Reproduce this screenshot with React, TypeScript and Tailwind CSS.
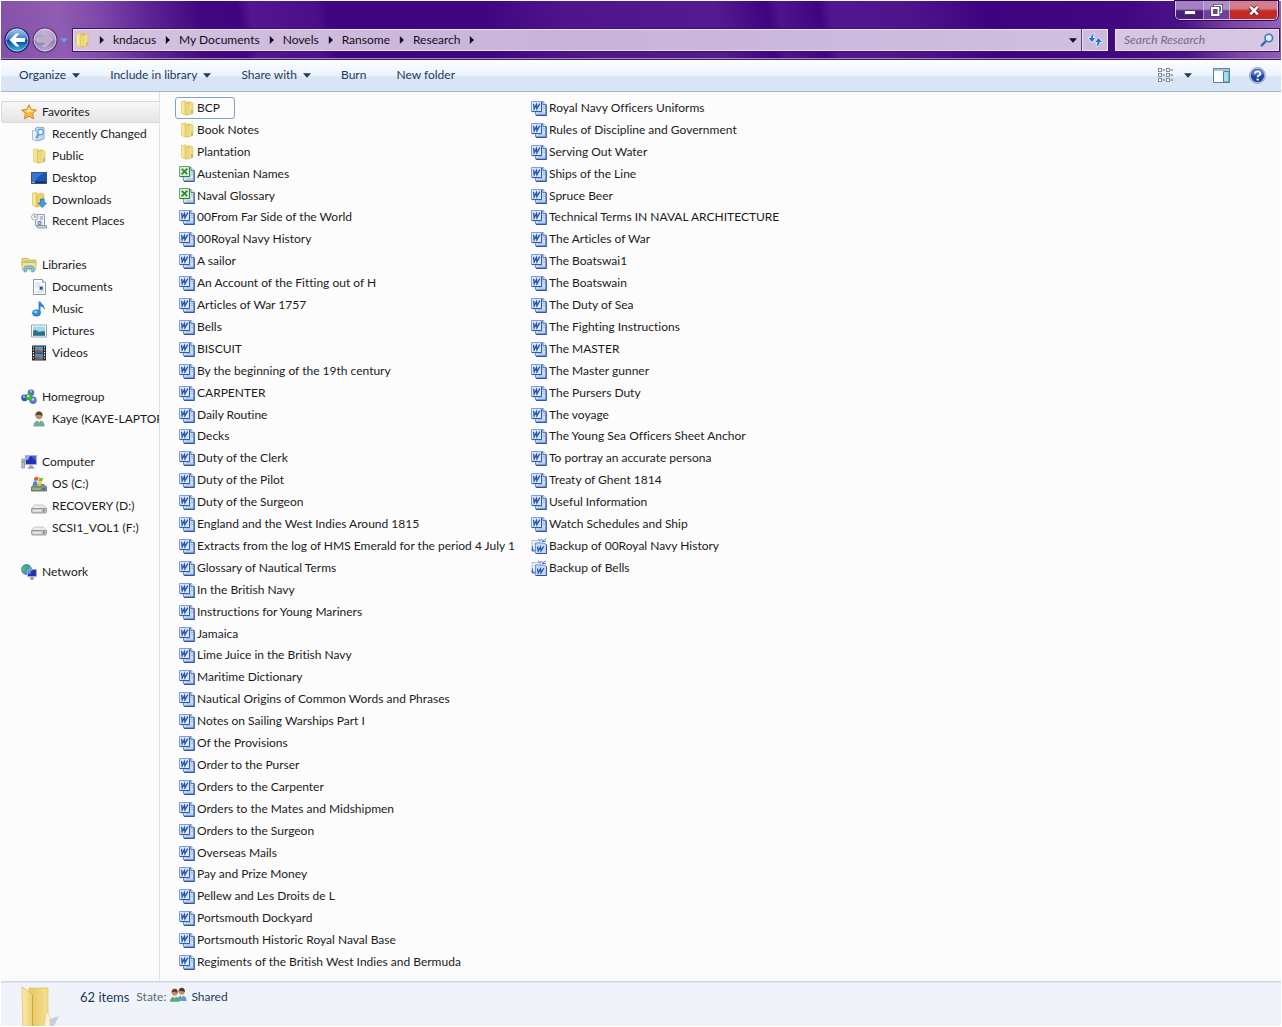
import React from "react";

type IconProps = { className?: string };
type Icon = (props: IconProps) => React.JSX.Element;

const base = "block size-4 shrink-0";

function FolderIcon({ className = base }: IconProps) {
  return (
    <svg viewBox="0 0 16 16" className={className} aria-hidden="true">
      <path d="M2.500 1.500 7 .8v14.400L2.500 13.500z" fill="#f3dc80" stroke="#dcbd58" strokeWidth=".5" />
      <path d="M7 3 10.500 1.500V14L7 15.200z" fill="#e9c95f" stroke="#d3b04a" strokeWidth=".5" />
      <path d="M9 3.500 12.500 2 14 3.500v10L9 15z" fill="#f2db82" stroke="#d5b450" strokeWidth=".5" />
      <path d="M4 2.500v10.500" stroke="#fbf0b4" strokeWidth="1.200" />
      <path d="M8 4v10" stroke="#fdf5cd" strokeWidth=".8" />
      <path d="M12 10.500l2-.5v3.500l-2 .5z" fill="#a9c48a" />
    </svg>
  );
}

function WordIcon({ className = base }: IconProps) {
  return (
    <svg viewBox="0 0 16 16" className={className} aria-hidden="true">
      <path d="M4.500 1.500h7.500l3 3v10.500H4.500z" fill="#cfe0fa" stroke="#6f92cc" />
      <path d="M15.200 4.500V15.400H5" fill="none" stroke="#2f559f" strokeWidth="1.100" />
      <path d="M12 1.500v3h3" fill="#f4f8ff" stroke="#3d5f9b" strokeWidth=".8" />
      <path d="M12 6.500h2M12 8.500h2M7 13h7" stroke="#93b3e6" strokeWidth=".8" />
      <path d="M.5 1.500H10.500V11.500H.5z" fill="#dbe7fb" stroke="#7c9fdb" />
      <path d="M10.600 2V11.600H1" fill="none" stroke="#2c55a8" />
      <path d="M2.600 3.800 3.200 8.800 5.500 4.500l.4 4.300L8.800 3.600" fill="none" stroke="#2450ae" strokeWidth="1.300" />
    </svg>
  );
}

function ExcelIcon({ className = base }: IconProps) {
  return (
    <svg viewBox="0 0 16 16" className={className} aria-hidden="true">
      <path d="M4.500 1.500h7.500l3 3v10.500H4.500z" fill="#dbe9f6" stroke="#7f9cc2" />
      <path d="M15.200 4.500V15.400H5" fill="none" stroke="#3d5f91" strokeWidth="1.100" />
      <path d="M12 1.500v3h3" fill="#f6faff" stroke="#3f5f86" strokeWidth=".8" />
      <path d="M12 6.500h2M12 9h2M7 13h7M10 12v2.500" stroke="#9bb8d8" strokeWidth=".8" />
      <path d="M.5.500H10.500V10.500H.5z" fill="#d8eed2" stroke="#62a85e" />
      <path d="M10.600 1V10.600H1" fill="none" stroke="#2f7c36" />
      <path d="M2.800 2.800l5.400 5.400M8.400 2.600l-5.800 5.800" fill="none" stroke="#2c8a32" strokeWidth="1.700" />
    </svg>
  );
}

function BackupIcon({ className = base }: IconProps) {
  return (
    <svg viewBox="0 0 16 16" className={className} aria-hidden="true">
      <path d="M1 2.500h8v9H1z" fill="#e4ecf8" stroke="#a3b6d3" strokeWidth=".8" />
      <path d="M7 .8l2.500 2 1-1.800 1.500 1.800L15 .8M11 3.500h4" fill="none" stroke="#5f7fb8" strokeWidth="1" />
      <path d="M4.500 5H13l2.500 1.500v9h-11z" fill="#c6daf8" stroke="#6f92cc" />
      <path d="M15.400 6.500v9H5" fill="none" stroke="#2f559f" />
      <path d="M6.500 8.500l.8 4.300L9.500 9l.5 3.800 2.700-4.500" fill="none" stroke="#1f55b5" strokeWidth="1.300" />
      <path d="M1.500 8.500v4.300H4M.5 11.200l1 1.600" fill="none" stroke="#4770b5" strokeWidth="1.200" />
    </svg>
  );
}

function StarIcon({ className = base }: IconProps) {
  return (
    <svg viewBox="0 0 16 16" className={className} aria-hidden="true">
      <path d="M8 .8l2.200 4.700 5.200.6-3.900 3.500 1.100 5.200L8 12.200l-4.600 2.600 1.100-5.200L.6 6.100l5.200-.6z" fill="#fbb63f" stroke="#d9822b" strokeLinejoin="round" />
      <path d="M8 2.800l1.500 3.500 3.500.5-5 1.700-4.700-1.700 3.200-.5z" fill="#ffe79a" />
    </svg>
  );
}

function SearchFolderIcon({ className = base }: IconProps) {
  return (
    <svg viewBox="0 0 16 16" className={className} aria-hidden="true">
      <path d="M4.500 2 8 1l5 .8v11l-6 2.200-2.500-1z" fill="#bdd8f2" stroke="#7fa6cf" strokeWidth=".9" />
      <path d="M1.500 4.500 6 5v10l-4.500-1.500z" fill="#e4f0fb" stroke="#8fb2d8" strokeWidth=".8" />
      <circle cx="9.500" cy="6" r="2.800" fill="#eff7ff" stroke="#5b94d0" strokeWidth="1.100" />
      <path d="M7.500 8.500 5 12" stroke="#5b94d0" strokeWidth="1.600" />
    </svg>
  );
}

function DesktopIcon({ className = base }: IconProps) {
  return (
    <svg viewBox="0 0 16 16" className={className} aria-hidden="true">
      <path d="M.5 2.500h15v11H.5z" fill="#1d56b8" stroke="#3a4f80" />
      <path d="M1 3h12Q6 6 4 11.500H1z" fill="#4586dc" opacity=".7" />
      <path d="M1 11.500h14V13H1z" fill="#1a2c57" />
      <path d="M1 11.500h3V13H1z" fill="#6fb2ef" />
    </svg>
  );
}

function DownloadsIcon({ className = base }: IconProps) {
  return (
    <svg viewBox="0 0 16 16" className={className} aria-hidden="true">
      <path d="M1.500 1 6 .6v14.600L1.500 13z" fill="#f3dc80" stroke="#d5b64f" strokeWidth=".6" />
      <path d="M6 2.500 11 1l2 1.500V13l-7 2z" fill="#ecd06c" stroke="#cfae48" strokeWidth=".6" />
      <path d="M3 2.500v10.500" stroke="#fbf0b4" strokeWidth="1.200" />
      <path d="M9.500 7h3.500v4h2.500l-4.200 4.600L7 11h2.500z" fill="#3ea0ea" stroke="#1b67b4" strokeWidth=".7" />
    </svg>
  );
}

function RecentIcon({ className = base }: IconProps) {
  return (
    <svg viewBox="0 0 16 16" className={className} aria-hidden="true">
      <path d="M4.500 1.500h9v11h-9z" fill="#eef2f6" stroke="#8f9cab" />
      <path d="M5.500 12.500h10v2.500h-9z" fill="#cdd5de" stroke="#7f8c9c" strokeWidth=".8" />
      <path d="M9 4h3M9 6h3M7 8.500h3v3H7z" fill="#a7c3df" stroke="#6c87a6" strokeWidth=".9" />
      <circle cx="3.800" cy="4" r="3.200" fill="#f8fafc" stroke="#98a3b0" strokeWidth=".9" />
      <path d="M3.800 2v2.200h1.700" fill="none" stroke="#5b6877" strokeWidth=".8" />
    </svg>
  );
}

function LibrariesIcon({ className = base }: IconProps) {
  return (
    <svg viewBox="0 0 16 16" className={className} aria-hidden="true">
      <path d="M1 1.500h6l1 1.500h7v5H1z" fill="#f3d873" stroke="#cda942" strokeWidth=".8" />
      <path d="M2.500 3.500h11v3h-11z" fill="#a8d689" />
      <path d="M.8 5.500h14.400L14.500 13h-13z" fill="#f7e59b" stroke="#d2b24e" strokeWidth=".8" />
      <path d="M3 14.800V11q0-2 2-2h6q2 0 2 2v3.800h-2.300v-3.300H5.300v3.300z" fill="#8cc7ee" stroke="#4f94c6" strokeWidth=".8" />
    </svg>
  );
}

function DocumentsIcon({ className = base }: IconProps) {
  return (
    <svg viewBox="0 0 16 16" className={className} aria-hidden="true">
      <path d="M2.500.5h9l3 3v12h-12z" fill="#fdfdfe" stroke="#8c98a8" />
      <path d="M11.500.5v3h3" fill="#dfe6ee" stroke="#8c98a8" strokeWidth=".8" />
      <path d="M4.500 4h5M4.500 6h4M4.500 8h3M4.500 13h8" stroke="#b6c1ce" strokeWidth=".8" />
      <path d="M8 6.500h4.500v5H8z" fill="#9cc7ea" />
      <path d="M9 8h2.500v2.500H9z" fill="#1f4a86" />
    </svg>
  );
}

function MusicIcon({ className = base }: IconProps) {
  return (
    <svg viewBox="0 0 16 16" className={className} aria-hidden="true">
      <ellipse cx="5.500" cy="12" rx="4" ry="3.200" fill="#2b8fdc" stroke="#1767ac" strokeWidth=".6" />
      <path d="M7.600 12V.5h1.900c.3 2.500 5 3.500 4 8.500-.5-2-2-3.300-4-3.800V12z" fill="#2784d2" />
      <ellipse cx="4.700" cy="11" rx="1.900" ry="1.200" fill="#8fd0fa" />
    </svg>
  );
}

function PicturesIcon({ className = base }: IconProps) {
  return (
    <svg viewBox="0 0 16 16" className={className} aria-hidden="true">
      <path d="M.5 2h15v12H.5z" fill="#fff" stroke="#93a3b3" />
      <path d="M2 3.500h12v9H2z" fill="#9fd8f5" />
      <path d="M2 8.500c2-3 4-1 5 0s4-1 7 0v4H2z" fill="#2e7a72" />
      <path d="M2 11h12v1.500H2z" fill="#2a64a8" />
    </svg>
  );
}

function VideosIcon({ className = base }: IconProps) {
  return (
    <svg viewBox="0 0 16 16" className={className} aria-hidden="true">
      <path d="M1 .5h14v15H1z" fill="#23272e" />
      <path d="M4 1.500h8v6H4z" fill="#4e9ad3" />
      <path d="M4 8.500h8v6H4z" fill="#4b8fc9" />
      <path d="M4 5.500l3-1L10 6l2-.5v2H4zM4 12.500l3-1 3 2 2-1v2H4z" fill="#a4502f" />
      <path d="M2.500 1.500v13M13.500 1.500v13" stroke="#e6eaee" strokeWidth="1.200" strokeDasharray="1.300 1.400" />
    </svg>
  );
}

function HomegroupIcon({ className = base }: IconProps) {
  return (
    <svg viewBox="0 0 16 16" className={className} aria-hidden="true">
      <circle cx="10" cy="3.800" r="3.300" fill="#4577c4" />
      <circle cx="3.600" cy="8.800" r="3.400" fill="#2f57b5" />
      <circle cx="12" cy="11.200" r="3.700" fill="#5b77c4" />
      <circle cx="8" cy="8" r="3.300" fill="#44ad3c" />
      <circle cx="7.300" cy="7" r="1.300" fill="#b5ec9c" />
      <circle cx="3" cy="7.800" r="1.200" fill="#9dbdf2" />
      <circle cx="10" cy="2.600" r="1.100" fill="#a8cdf6" />
      <circle cx="12" cy="10.500" r="1.300" fill="#c1d1f7" />
    </svg>
  );
}

function Person({ coat, hair }: { coat: string; hair: string }) {
  return (
    <>
      <path d="M1 15.500c0-4 2-5.500 4.500-6h2C10.500 10 12 11.500 12 15.500z" fill={coat} />
      <path d="M5 9l1.500 3L8 9z" fill="#f6efe6" />
      <circle cx="6.500" cy="5" r="3.300" fill="#c98f68" />
      <path d="M3 5.500C2.500 1.500 5 .3 7 .5s3.500 1.800 3 5C9 3.800 6 4.500 4 3.800z" fill={hair} />
    </>
  );
}

function UserIcon({ className = base }: IconProps) {
  return (
    <svg viewBox="0 0 16 16" className={className} aria-hidden="true">
      <g transform="translate(1.500 0)">
        <Person coat="#6fae93" hair="#5c4330" />
      </g>
    </svg>
  );
}

function UsersIcon({ className = base }: IconProps) {
  return (
    <svg viewBox="0 0 18 16" className={className} aria-hidden="true">
      <g transform="translate(6.500 0) scale(.92)">
        <Person coat="#5f9fc2" hair="#4b3a30" />
      </g>
      <g transform="translate(-1 1) scale(.92)">
        <Person coat="#5aa87f" hair="#6b3f2a" />
      </g>
    </svg>
  );
}

function ComputerIcon({ className = base }: IconProps) {
  return (
    <svg viewBox="0 0 16 16" className={className} aria-hidden="true">
      <path d="M.8 5h2.700v9H.8z" fill="#b9c2cc" stroke="#7c8793" strokeWidth=".7" />
      <path d="M1.200 7h1.800v2H1.200z" fill="#65b548" />
      <path d="M4.500 1.500h11v9h-11z" fill="#2431b8" stroke="#aab4c4" />
      <path d="M5 2h4l-2 4H5z" fill="#8ea3f0" />
      <path d="M10 2h5v5z" fill="#4c63dc" />
      <path d="M8.500 11h3l1 3h-5z" fill="#a7b0bc" />
      <path d="M6.500 14h7" stroke="#7c8793" />
    </svg>
  );
}

function OsDriveIcon({ className = base }: IconProps) {
  return (
    <svg viewBox="0 0 16 16" className={className} aria-hidden="true">
      <path d="M.5 11 3 8.500h10l2.500 2.500v4H.5z" fill="#7e8b8f" stroke="#56666a" strokeWidth=".8" />
      <path d="M1.500 12h8v2h-8z" fill="#98b94e" />
      <path d="M11 12h3v2h-3z" fill="#3c6fa8" />
      <path d="M3.500 1.500Q5.500.2 7.500 1.300L6.700 4.800Q4.700 4 2.700 5z" fill="#e8592c" />
      <path d="M8.200 1.600Q10 2.600 12.200 1.400L11.300 5Q9.300 6 7.300 5z" fill="#7cb93a" />
      <path d="M2.500 5.800Q4.500 4.800 6.500 5.600L5.700 9Q3.700 8.200 1.700 9.200z" fill="#3b8be0" />
      <path d="M7.200 5.900Q9 6.800 11.100 5.800L10.300 9.200Q8.300 10.200 6.300 9.200z" fill="#f7c22f" />
    </svg>
  );
}

function DriveIcon({ className = base }: IconProps) {
  return (
    <svg viewBox="0 0 16 16" className={className} aria-hidden="true">
      <path d="M.6 10.500 3.500 7h9l2.900 3.500z" fill="#ececec" stroke="#b0b0b0" strokeWidth=".7" />
      <path d="M.6 10.500h14.800V14q0 1-1 1H1.600q-1 0-1-1z" fill="#c6c8ca" stroke="#888c90" strokeWidth=".8" />
      <path d="M2 12.800h8" stroke="#f2f3f4" strokeWidth="1.200" />
      <path d="M12 11.800h1.500v1.800H12z" fill="#55685c" />
    </svg>
  );
}

function NetworkIcon({ className = base }: IconProps) {
  return (
    <svg viewBox="0 0 16 16" className={className} aria-hidden="true">
      <circle cx="5.500" cy="5.500" r="5" fill="#2f9ad6" stroke="#2266a6" strokeWidth=".6" />
      <path d="M2 2.500C4 1 6 1.500 5.500 3.500S3 5 3.500 7 2 8.500.9 6 1.200 3.500 2 2.500zM7.500 1.500c2 .5 3 2 3 4L8 4z" fill="#5cba4b" />
      <path d="M6.500 5.500h9v7h-9z" fill="#2431b8" stroke="#aab4c4" strokeWidth=".9" />
      <path d="M7 6h4l-2 4H7z" fill="#6487ec" />
      <path d="M9.500 13h3l.8 2.500h-4.600z" fill="#8f9aa8" />
    </svg>
  );
}

function RightArrow() {
  return (
    <svg viewBox="0 0 5 8" className="mx-2 block h-2 w-[7px] shrink-0" aria-hidden="true">
      <path d="M.8 0 5 4 .8 8z" fill="#120a1c" />
    </svg>
  );
}

function DownArrow({ className = "block h-[5px] w-2 shrink-0" }: IconProps) {
  return (
    <svg viewBox="0 0 8 5" className={className} aria-hidden="true">
      <path d="M0 .3h8L4 4.700z" fill="currentColor" />
    </svg>
  );
}

const path = ["kndacus", "My Documents", "Novels", "Ransome", "Research"];

const actions: { label: string; menu?: boolean }[] = [
  { label: "Organize", menu: true },
  { label: "Include in library", menu: true },
  { label: "Share with", menu: true },
  { label: "Burn" },
  { label: "New folder" },
];

const places: { title: string; icon: Icon; items: { name: string; icon: Icon }[] }[] = [
  {
    title: "Favorites",
    icon: StarIcon,
    items: [
      { name: "Recently Changed", icon: SearchFolderIcon },
      { name: "Public", icon: FolderIcon },
      { name: "Desktop", icon: DesktopIcon },
      { name: "Downloads", icon: DownloadsIcon },
      { name: "Recent Places", icon: RecentIcon },
    ],
  },
  {
    title: "Libraries",
    icon: LibrariesIcon,
    items: [
      { name: "Documents", icon: DocumentsIcon },
      { name: "Music", icon: MusicIcon },
      { name: "Pictures", icon: PicturesIcon },
      { name: "Videos", icon: VideosIcon },
    ],
  },
  { title: "Homegroup", icon: HomegroupIcon, items: [{ name: "Kaye (KAYE-LAPTOP)", icon: UserIcon }] },
  {
    title: "Computer",
    icon: ComputerIcon,
    items: [
      { name: "OS (C:)", icon: OsDriveIcon },
      { name: "RECOVERY (D:)", icon: DriveIcon },
      { name: "SCSI1_VOL1 (F:)", icon: DriveIcon },
    ],
  },
  { title: "Network", icon: NetworkIcon, items: [] },
];

const folders = ["BCP", "Book Notes", "Plantation"];
const sheets = ["Austenian Names", "Naval Glossary"];
const documents = [
  "00From Far Side of the World", "00Royal Navy History", "A sailor", "An Account of the Fitting out of H",
  "Articles of War 1757", "Bells", "BISCUIT", "By the beginning of the 19th century", "CARPENTER",
  "Daily Routine", "Decks", "Duty of the Clerk", "Duty of the Pilot", "Duty of the Surgeon",
  "England and the West Indies Around 1815", "Extracts from the log of HMS Emerald for the period 4 July 1",
  "Glossary of Nautical Terms", "In the British Navy", "Instructions for Young Mariners", "Jamaica",
  "Lime Juice in the British Navy", "Maritime Dictionary", "Nautical Origins of Common Words and Phrases",
  "Notes on Sailing Warships Part I", "Of the Provisions", "Order to the Purser", "Orders to the Carpenter",
  "Orders to the Mates and Midshipmen", "Orders to the Surgeon", "Overseas Mails", "Pay and Prize Money",
  "Pellew and Les Droits de L", "Portsmouth Dockyard", "Portsmouth Historic Royal Naval Base",
  "Regiments of the British West Indies and Bermuda", "Royal Navy Officers Uniforms",
  "Rules of Discipline and Government", "Serving Out Water", "Ships of the Line", "Spruce Beer",
  "Technical Terms IN NAVAL ARCHITECTURE", "The Articles of War", "The Boatswai1", "The Boatswain",
  "The Duty of Sea", "The Fighting Instructions", "The MASTER", "The Master gunner", "The Pursers Duty",
  "The voyage", "The Young Sea Officers Sheet Anchor", "To portray an accurate persona",
  "Treaty of Ghent 1814", "Useful Information", "Watch Schedules and Ship",
];
const backups = ["Backup of 00Royal Navy History", "Backup of Bells"];

const files: { name: string; icon: Icon }[] = [
  ...folders.map((name) => ({ name, icon: FolderIcon })),
  ...sheets.map((name) => ({ name, icon: ExcelIcon })),
  ...documents.map((name) => ({ name, icon: WordIcon })),
  ...backups.map((name) => ({ name, icon: BackupIcon })),
];

function WindowControls() {
  return (
    <div className="mr-[3px] flex h-[19px] overflow-hidden rounded-b-[5px] border border-t-0 border-[#d9c3e8] text-white shadow-[0_0_0_1px_#2d0a50]">
      <button type="button" aria-label="Minimize" className="flex w-7 items-end justify-center border-r border-[#d9c3e8]/70 bg-linear-to-b from-[#a67fc2] from-45% to-[#4a1c7c] to-55% pb-1">
        <span className="h-[5px] w-3 rounded-[1px] border border-[#4b3562] bg-white" />
      </button>
      <button type="button" aria-label="Restore" className="flex w-[26px] items-center justify-center border-r border-[#d9c3e8]/70 bg-linear-to-b from-[#b08fc9] from-45% to-[#6d409b] to-55%">
        <svg viewBox="0 0 13 13" className="size-[13px]" aria-hidden="true">
          <path d="M4.500 1.500h7v7h-7z" fill="none" stroke="#4b3562" strokeWidth="3" />
          <path d="M4.500 1.500h7v7h-7z" fill="none" stroke="#fff" strokeWidth="1.400" />
          <path d="M2 4h6.500v7H2z" fill="#6b4a8c" stroke="#4b3562" strokeWidth="3" />
          <path d="M2 4h6.500v7H2z" fill="#6b4a8c" stroke="#fff" strokeWidth="1.800" />
        </svg>
      </button>
      <button type="button" aria-label="Close" className="flex w-[47px] items-center justify-center bg-linear-to-b from-[#d3808c] from-40% to-[#c22a22] to-55%">
        <svg viewBox="0 0 12 11" className="h-[11px] w-3" aria-hidden="true">
          <path d="M2 1.500l8 8M10 1.500l-8 8" stroke="#5c2a35" strokeWidth="4.200" />
          <path d="M2.200 1.700l7.600 7.600M9.800 1.700 2.200 9.300" stroke="#fff" strokeWidth="2.500" />
        </svg>
      </button>
    </div>
  );
}

function NavButtons() {
  return (
    <div className="flex items-center text-[#5aa5e8]">
      <button type="button" aria-label="Back" className="block">
        <svg viewBox="0 0 26 26" className="size-[26px]" aria-hidden="true">
          <defs>
            <linearGradient id="back" x1="0" y1="0" x2="0" y2="1">
              <stop offset="0" stopColor="#a9cdf0" />
              <stop offset=".46" stopColor="#3a7cc8" />
              <stop offset=".52" stopColor="#0d3f92" />
              <stop offset="1" stopColor="#36c3f2" />
            </linearGradient>
          </defs>
          <circle cx="13" cy="13" r="12" fill="url(#back)" stroke="#2b1c55" strokeWidth="1.200" />
          <circle cx="13" cy="13" r="10.900" fill="none" stroke="#bcdcf5" strokeWidth=".8" opacity=".8" />
          <path d="M5.500 13 12 6.500h3.500L11.500 11H21v4h-9.500l4 4.500H12z" fill="#fff" />
        </svg>
      </button>
      <button type="button" aria-label="Forward" className="ml-0.5 block">
        <svg viewBox="0 0 26 26" className="size-[26px]" aria-hidden="true">
          <defs>
            <linearGradient id="fwd" x1="0" y1="0" x2="0" y2="1">
              <stop offset="0" stopColor="#c7b9d6" />
              <stop offset=".5" stopColor="#a899bd" />
              <stop offset=".54" stopColor="#8f7dab" />
              <stop offset="1" stopColor="#bba9d6" />
            </linearGradient>
          </defs>
          <circle cx="13" cy="13" r="12" fill="url(#fwd)" stroke="#55307d" strokeWidth="1.200" />
          <circle cx="13" cy="13" r="10.900" fill="none" stroke="#ddcfe8" strokeWidth=".8" />
          <path d="M20.500 13 14 6.500h-3.500L14.500 11H5v4h9.500l-4 4.500H14z" fill="#b9aacb" stroke="#d2c6de" strokeWidth=".7" />
        </svg>
      </button>
      <button type="button" aria-label="Recent pages" className="ml-0.5 block">
        <DownArrow />
      </button>
    </div>
  );
}

function AddressBar() {
  return (
    <nav aria-label="Address" className="ml-1 flex h-6 min-w-0 flex-1 border border-[#3c1462] bg-[#cdbade] text-[#150c20]">
      <div className="flex min-w-0 flex-1 items-center border border-[#e9dff0] bg-linear-to-r from-[#d5c3e0] via-[#c8b2da] to-[#cfbfe0]">
        <FolderIcon />
        <div className="flex flex-1 items-center">
          <RightArrow />
          {path.map((name) => (
            <React.Fragment key={name}>
              <button type="button" className="leading-4 whitespace-nowrap">{name}</button>
              <RightArrow />
            </React.Fragment>
          ))}
        </div>
        <button type="button" aria-label="Previous locations" className="px-1">
          <DownArrow />
        </button>
      </div>
      <button type="button" aria-label="Refresh" className="flex w-[26px] items-center justify-center border border-[#e9dff0] shadow-[-1px_0_0_#5b3a7c]">
        <svg viewBox="0 0 16 16" className="size-4" aria-hidden="true">
          <g stroke="#e6f1fb" strokeWidth="1.600" strokeLinejoin="round" paintOrder="stroke" fill="#2373bf">
            <path d="M7 1.500Q4 2.500 4 6H1.500L5 10 8 6H6Q5.800 3.500 7 1.500z" />
            <path d="M9.500 14.500Q12.500 13.500 12.500 10H15L11.500 6 8.500 10h2Q10.700 12.500 9.500 14.500z" />
          </g>
        </svg>
      </button>
    </nav>
  );
}

function SearchBox() {
  return (
    <label className="mr-px ml-[5px] flex h-6 w-[166px] shrink-0 items-center border border-[#3c1462] bg-[#d6c6e2] pr-[5px] pl-[9px] shadow-[inset_0_0_0_1px_#e9dff0]">
      <input
        type="text"
        aria-label="Search Research"
        placeholder="Search Research"
        className="w-0 min-w-0 flex-1 bg-transparent italic outline-none placeholder:text-[#77698a]"
      />
      <svg viewBox="0 0 14 14" className="size-[14px] shrink-0" aria-hidden="true">
        <path d="M6 8 1.800 12.300" stroke="#3b68a5" strokeWidth="2.400" strokeLinecap="round" />
        <circle cx="8.800" cy="5" r="3.800" fill="#e3eefa" stroke="#3b78bd" strokeWidth="1.600" />
      </svg>
    </label>
  );
}

function Toolbar() {
  return (
    <div role="toolbar" aria-label="Folder actions" className="flex h-8 shrink-0 items-center border-b border-[#a9b5c5] bg-linear-to-b from-[#fbfdff] from-5% via-[#eaf3fc] via-50% to-[#d9e5f4] to-55% pr-[15px] pb-px pl-[18px] text-[#1e395b]">
      <div className="flex flex-1 items-center gap-[30px]">
        {actions.map((action) => (
          <button key={action.label} type="button" className="flex items-center gap-1.5 leading-4 whitespace-nowrap">
            {action.label}
            {action.menu && <DownArrow />}
          </button>
        ))}
      </div>
      <button type="button" aria-label="Change view" className="flex items-center gap-[10px]">
        <svg viewBox="0 0 16 14" className="h-[14px] w-4" aria-hidden="true">
          {[0, 8].map((x) =>
            [0.5, 5.5, 10.5].map((y) => (
              <g key={`${x}-${y}`} transform={`translate(${x} ${y})`}>
                <rect x=".5" y="0" width="3" height="3" fill="#fff" stroke="#75808e" strokeWidth=".9" />
                <path d="M4.500 1.500H7" stroke="#5b6674" />
              </g>
            )),
          )}
        </svg>
        <DownArrow />
      </button>
      <button type="button" aria-label="Show the preview pane" className="ml-[21px]">
        <svg viewBox="0 0 17 15" className="block h-[15px] w-[17px]" aria-hidden="true">
          <path d="M.5.500h16v14H.5z" fill="#fdfeff" stroke="#5b7f9f" />
          <path d="M1 1h15v2H1z" fill="#a9c4dc" />
          <path d="M10.500 3.500H16V14h-5.500z" fill="#a5dcea" stroke="#4b86a8" />
        </svg>
      </button>
      <button type="button" aria-label="Get help" className="ml-[19px]">
        <svg viewBox="0 0 17 17" className="block size-[17px]" aria-hidden="true">
          <circle cx="8.500" cy="8.500" r="7.900" fill="#c8d2e4" stroke="#7f8ba2" strokeWidth=".8" />
          <circle cx="8.500" cy="8.500" r="6.700" fill="#2443a4" />
          <path d="M2.300 8a6.200 6.200 0 0 1 12.400 0q-6 1.500-12.400 0z" fill="#6f90dc" opacity=".6" />
          <path d="M6 6.800Q6 4.300 8.600 4.300t2.600 2.200Q11.200 7.800 9.800 8.500 8.600 9.100 8.600 10.300" fill="none" stroke="#fff" strokeWidth="1.800" />
          <circle cx="8.600" cy="12.600" r="1.150" fill="#fff" />
        </svg>
      </button>
    </div>
  );
}

function Sidebar() {
  return (
    <nav aria-label="Places" className="grid w-[159px] shrink-0 grid-rows-[repeat(40,minmax(0,1fr))] overflow-hidden border-r border-[#d6e5f5] pt-[9px] pb-1">
      {places.map(({ title, icon: TitleIcon, items }, i) => (
        <React.Fragment key={title}>
          {i > 0 && <span aria-hidden="true" />}
          <a
            href="#"
            className={
              i === 0
                ? "flex items-center gap-[5px] rounded-l-[3px] border border-r-0 border-[#d9d9d9] bg-linear-to-b from-[#f8f8f8] to-[#e5e5e5] pl-[19px] whitespace-nowrap"
                : "flex items-center gap-[5px] pl-5 whitespace-nowrap"
            }
          >
            <TitleIcon />
            {title}
          </a>
          {items.map(({ name, icon: ItemIcon }) => (
            <a key={name} href="#" className="flex items-center gap-[5px] pl-[30px] whitespace-nowrap">
              <ItemIcon />
              {name}
            </a>
          ))}
        </React.Fragment>
      ))}
    </nav>
  );
}

function FileList() {
  return (
    <main className="grid min-w-0 flex-1 auto-cols-[352px] grid-flow-col grid-rows-[repeat(40,minmax(0,1fr))] justify-start overflow-hidden pt-[5px] pb-2 pl-[15px]">
      {files.map(({ name, icon: FileIcon }, i) => (
        <button
          key={name}
          type="button"
          className={
            i === 0
              ? "flex w-[60px] items-center gap-0.5 rounded-[3px] border border-[#7da2ce] pl-[3px] text-left whitespace-nowrap"
              : "flex items-center gap-0.5 justify-self-start pl-1 text-left whitespace-nowrap"
          }
        >
          <FileIcon />
          {name}
        </button>
      ))}
    </main>
  );
}

function StatusBar() {
  return (
    <footer className="flex h-[45px] shrink-0 items-start overflow-hidden border-t border-[#cdd7e6] bg-[#f0f4fa] pl-4 text-[#1e395b] shadow-[inset_0_1px_0_#dfe6f1]">
      <svg viewBox="0 0 48 48" className="mt-1 size-12 shrink-0" aria-hidden="true">
        <defs>
          <linearGradient id="front" x1="0" x2="1">
            <stop offset="0" stopColor="#f9edaa" />
            <stop offset="1" stopColor="#ecd077" />
          </linearGradient>
          <linearGradient id="rear" x1="0" x2="1">
            <stop offset="0" stopColor="#e6c65e" />
            <stop offset="1" stopColor="#f4df92" />
          </linearGradient>
        </defs>
        <path d="M30 44V34l12-4-4 8-6 6z" fill="#9fa9bd" opacity=".5" />
        <path d="M12 2h19v42H12z" fill="url(#rear)" stroke="#dcbb5a" strokeWidth=".6" />
        <path d="M29 26q4 2 4 7v11h-6z" fill="#fbf6d8" stroke="#dfc678" strokeWidth=".6" />
        <path d="M5 1l9 6q1.500 1 1.500 3v37L6 42z" fill="url(#front)" stroke="#d6b44e" strokeWidth=".6" />
        <path d="M15.500 9v38" stroke="#cfa53c" strokeWidth="1" />
      </svg>
      <div className="ml-[15px] flex h-[30px] items-center leading-4">
        <span className="text-[13px]">62 items</span>
        <span className="ml-[7px] text-[#5a6779]">State:</span>
        <UsersIcon className="mb-1 ml-1 block h-4 w-[17px] shrink-0" />
        <span className="ml-1">Shared</span>
      </div>
    </footer>
  );
}

export default function App() {
  return (
    <div className="flex h-screen flex-col bg-white p-px font-['Lato','Open_Sans',sans-serif] text-[12px] text-[#1b1b1b] [font-variant-ligatures:none]">
      <header className="flex shrink-0 flex-col border-b border-[#43206a] bg-[linear-gradient(80deg,#8450a8_0,#8f5db1_5%,#7f4aaa_8%,#5c2594_12%,#420780_16%,#3f0480_19%,#531690_20%,#4c0f8a_25%,#3f0480_26%,#3f0480_38%,#4f148c_44%,#541a90_56%,#3f0480_60%,#4f148c_61%,#3f0480_64%,#511790_65%,#4f148c_71%,#3d0380_77%,#420882_88%,#4a1289_92%,#7a45a5_96%,#9564b8_100%)] pb-1.5 shadow-[inset_0_-1px_0_#a98bc4]">
        <div className="flex h-[26px] items-start justify-end">
          <WindowControls />
        </div>
        <div className="flex items-center pl-[3px]">
          <NavButtons />
          <AddressBar />
          <SearchBox />
        </div>
      </header>
      <Toolbar />
      <div className="flex min-h-0 flex-1 bg-[#fcfcfc]">
        <Sidebar />
        <FileList />
      </div>
      <StatusBar />
    </div>
  );
}
